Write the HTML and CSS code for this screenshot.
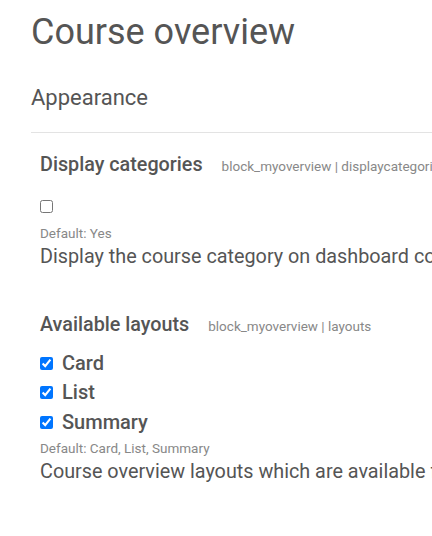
FILE: index.html
```html
<!DOCTYPE html>
<html lang="en">
<head>
<meta charset="utf-8">
<title>Course overview</title>
<link rel="stylesheet" href="styles.css">
</head>
<body>
<main class="page">
  <h2 class="page-title">Course overview</h2>
  <h3 class="section-title">Appearance</h3>
  <div class="settings">
    <div class="setting">
      <div class="setting-head">
        <span class="setting-name">Display categories</span>
        <span class="setting-key">block_myoverview | displaycategories</span>
      </div>
      <div class="setting-field">
        <input type="checkbox" class="check">
      </div>
      <div class="setting-default">Default: Yes</div>
      <div class="setting-desc">Display the course category on dashboard course items including list items and summary items.</div>
    </div>
    <div class="setting">
      <div class="setting-head">
        <span class="setting-name">Available layouts</span>
        <span class="setting-key">block_myoverview | layouts</span>
      </div>
      <div class="setting-field options">
        <label class="option"><input type="checkbox" class="check" checked> Card</label>
        <label class="option"><input type="checkbox" class="check" checked> List</label>
        <label class="option"><input type="checkbox" class="check" checked> Summary</label>
      </div>
      <div class="setting-default">Default: Card, List, Summary</div>
      <div class="setting-desc">Course overview layouts which are available for selection by users.</div>
    </div>
  </div>
</main>
</body>
</html>
```

FILE: styles.css
```css
html, body {
  margin: 0;
  padding: 0;
  background: #fff;
  overflow: hidden;
}

body {
  font-family: Roboto, "Liberation Sans", sans-serif;
  color: #555;
}

.page {
  padding: 11px 0 0 31px;
  width: 900px;
}

.page-title {
  font-size: 36px;
  font-weight: 400;
  line-height: 1.2;
  margin: 0 0 31px;
}

.section-title {
  font-size: 22px;
  font-weight: 400;
  line-height: 1.2;
  margin: 0;
  padding-bottom: 20px;
  border-bottom: 1px solid #e3e3e3;
}

.settings {
  padding-left: 9px;
}

.setting {
  padding-top: 20px;
  padding-bottom: 25px;
}

.setting-head {
  display: flex;
  align-items: baseline;
  gap: 19px;
  white-space: nowrap;
}

.setting-name {
  font-size: 19.75px;
  font-weight: 500;
}

.setting-key {
  font-size: 13.5px;
  color: #888;
}

.setting-field {
  margin-top: 20px;
}

.check {
  margin: 0;
  width: 13px;
  height: 13px;
  vertical-align: middle;
}

.options {
  margin-top: 15px;
  display: flex;
  flex-direction: column;
  gap: 4.5px;
}

.option {
  display: flex;
  align-items: center;
  gap: 9px;
  font-size: 20px;
  font-weight: 500;
  line-height: 25px;
}

.setting-default {
  margin-top: 10px;
  font-size: 13.5px;
  color: #888;
}

.options + .setting-default {
  margin-top: 5px;
}

.setting-desc {
  font-size: 19.8px;
  white-space: nowrap;
  margin-top: 4px;
}
```
